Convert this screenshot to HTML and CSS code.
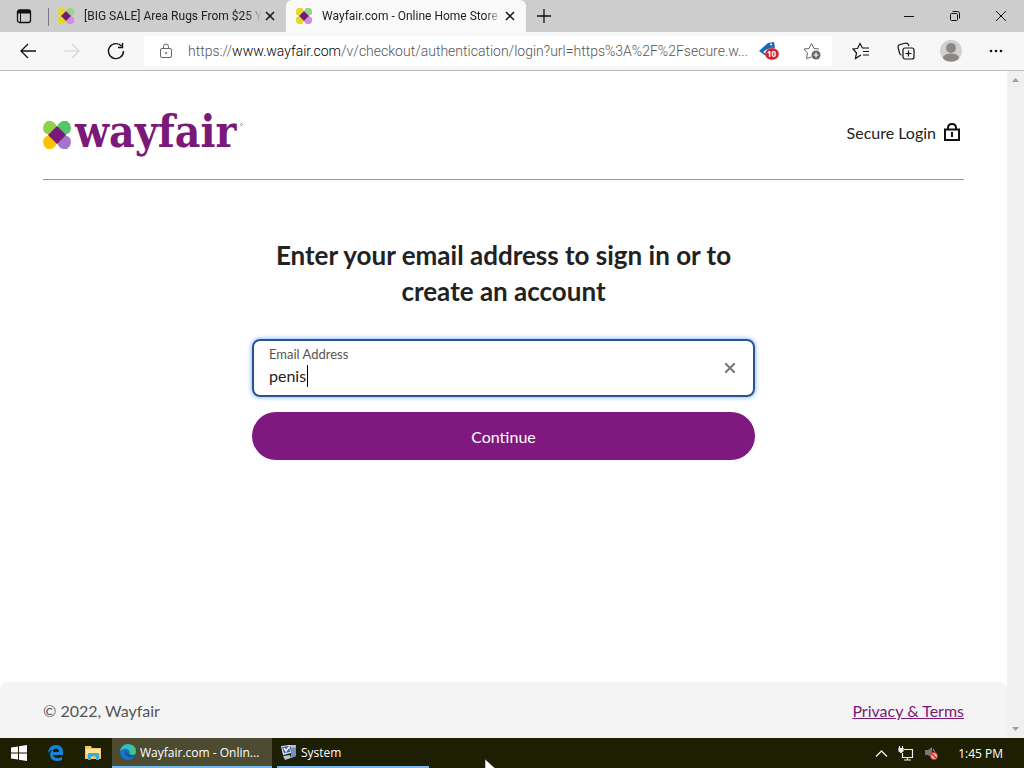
FILE: index.html
```html
<!DOCTYPE html>
<html lang="en">
<head>
    <meta charset="UTF-8">
    <title>Wayfair.com - Online Home Store</title>
    <link rel="stylesheet" href="styles.css">
</head>
<body>
    <!-- shared pinwheel, used by the tabs and the page logo -->
    <svg class="defs" aria-hidden="true">
        <symbol id="pinwheel" viewBox="0 0 28 28">
            <path fill="#8fd14a" d="M14 6 6 14 2 12Q0 10 0 7L1 3 4 0 8 0Q12 1 14 6Z"/>
            <path fill="#52c569" d="M14 6 22 14 26 12Q28 10 28 7L27 3 24 0 20 0Q16 1 14 6Z"/>
            <path fill="#fcc203" d="M14 22 6 14 2 16Q0 18 0 21L1 25 4 28 8 28Q12 27 14 22Z"/>
            <path fill="#a574cf" d="M14 22 22 14 26 16Q28 18 28 21L27 25 24 28 20 28Q16 27 14 22Z"/>
            <path fill="#7b1979" d="M14 5 23 14 14 23 5 14Z"/>
        </symbol>
        <symbol id="pinwheel-tab" viewBox="0 0 16 16">
            <path fill="#e6d72b" d="M8 3 3 8 0 6V2L2 0H6ZM3 8 8 13 6 16H2L0 14V10Z"/>
            <path fill="#9bd38a" d="M8 3 13 8 16 6V2L14 0H10Z"/>
            <path fill="#d68be6" d="M8 13 13 8 16 10V14L14 16H10Z"/>
            <path fill="#741a72" d="M8 3 13 8 8 13 3 8Z"/>
        </symbol>
    </svg>

    <div class="tab-bar">
        <button class="tab-menu" aria-label="Tab actions">
            <svg width="16" height="16" viewBox="0 0 16 16"><rect x="1.500" y="2" width="13" height="12.500" rx="2" fill="none" stroke="#111" stroke-width="1.300"/><path d="M1.500 5V4Q1.500 2 3.500 2H12.500Q14.500 2 14.500 4V5.500H1.500Z" fill="#111"/><path d="M4.500 5V14" stroke="#111" stroke-width="1"/></svg>
        </button>
        <div class="tab">
            <svg class="favicon"><use href="#pinwheel-tab"/></svg>
            <span class="tab-title">[BIG SALE] Area Rugs From $25 Y</span>
            <button class="tab-close" aria-label="Close tab"><svg width="10" height="10"><path d="M1 1 9 9M9 1 1 9" stroke="#111" stroke-width="1.500"/></svg></button>
        </div>
        <div class="tab active">
            <svg class="favicon"><use href="#pinwheel-tab"/></svg>
            <span class="tab-title">Wayfair.com - Online Home Store</span>
            <button class="tab-close" aria-label="Close tab"><svg width="10" height="10"><path d="M1 1 9 9M9 1 1 9" stroke="#111" stroke-width="1.500"/></svg></button>
        </div>
        <button class="new-tab" aria-label="New tab"><svg width="14" height="14"><path d="M7 0V14M0 7H14" stroke="#111" stroke-width="1.300"/></svg></button>
        <div class="window-buttons">
            <button aria-label="Minimize"><svg width="12" height="12"><path d="M1 6.500H11" stroke="#111"/></svg></button>
            <button aria-label="Restore"><svg width="12" height="12" fill="none" stroke="#111"><rect x="1.500" y="3.500" width="7" height="7" rx="1"/><path d="M3.500 1.500H8.500Q10.500 1.500 10.500 3.500V8.500"/></svg></button>
            <button aria-label="Close"><svg width="12" height="12"><path d="M1 1 11 11M11 1 1 11" stroke="#111"/></svg></button>
        </div>
    </div>

    <div class="toolbar">
        <button class="nav-button" aria-label="Back"><svg width="18" height="16" fill="none" stroke="#111" stroke-width="1.300"><path d="M17 8H2M9 1 2 8 9 15"/></svg></button>
        <button class="nav-button" aria-label="Forward" disabled><svg width="18" height="16" fill="none" stroke="#d4d4d4" stroke-width="1.200"><path d="M1 8H16M9 1 16 8 9 15"/></svg></button>
        <button class="nav-button" aria-label="Refresh"><svg width="18" height="18" fill="none" stroke="#111" stroke-width="1.400"><path d="M16.500 9A7.500 7.500 0 1 1 14.500 4M15.500 1V5.500H11"/></svg></button>
        <div class="address">
            <svg class="lock" width="14" height="16" fill="none" stroke="#666"><rect x="1.500" y="5.500" width="11" height="9" rx="1.500"/><path d="M4.500 5V3.500Q4.500 1 7 1T9.500 3.500V5"/><circle cx="7" cy="10" r=".6" fill="#666"/></svg>
            <span class="url">https://<b>www.wayfair.com</b>/v/checkout/authentication/login?url=https%3A%2F%2Fsecure.w...</span>
            <button aria-label="Coupons">
                <svg width="20" height="20" viewBox="0 0 20 20"><path d="M0 10 9 2 15 1 16 7 8 16Z" fill="#1769b8"/><path d="M4 11 8 8V13Z" fill="#fff"/><circle cx="12" cy="3.500" r="1" fill="#fff"/><ellipse cx="13" cy="13" rx="7" ry="6" fill="#d3232e" stroke="#f0b0b0" stroke-width=".5"/><text x="8" y="16" class="coupon-count">10</text></svg>
            </button>
            <button aria-label="Add to favorites">
                <svg width="18" height="18" fill="none" stroke="#666"><path d="M8.500 15 3.500 16.500 4.500 11 1 7 6 6.500 8.500 1.500 11 6.500 16 7"/><circle cx="13" cy="13" r="4.500" fill="#666" stroke="none"/><path d="M13 10.500V15.500M10.500 13H15.500" stroke="#fff" stroke-width="1.200"/></svg>
            </button>
        </div>
        <div class="tools">
            <button aria-label="Favorites"><svg width="18" height="18" fill="none" stroke="#111" stroke-width="1.200"><path d="M9 13 3.500 16.500 4.500 11 1 7 5.500 6.500 8 1.500 10.500 6H17M11 9.500H17M11 13H17"/></svg></button>
            <button aria-label="Collections"><svg width="18" height="18" fill="none" stroke="#111" stroke-width="1.200"><rect x="6" y="6" width="11" height="11" rx="2"/><path d="M11.500 8.500V14.500M8.500 11.500H14.500M4.500 13Q3 13 2.500 11L1 5Q1 3 3 2.500L9 1Q11 1 12 4"/></svg></button>
            <button aria-label="Profile"><svg width="22" height="22"><circle cx="11" cy="11" r="11" fill="#d2d0ce"/><circle cx="11" cy="8" r="5" fill="#8a8886"/><ellipse cx="11" cy="17.500" rx="8" ry="4" fill="#8a8886"/></svg></button>
            <button aria-label="Settings and more"><svg width="14" height="4" fill="#111"><circle cx="2" cy="2" r="1.300"/><circle cx="7" cy="2" r="1.300"/><circle cx="12" cy="2" r="1.300"/></svg></button>
        </div>
    </div>

    <div class="viewport">
        <div class="page">
            <header class="page-header">
                <a class="logo" href="#" aria-label="Wayfair">
                    <svg class="logo-mark"><use href="#pinwheel"/></svg>
                    <span>wayfair</span>
                    <svg class="trademark" width="3" height="3"><circle cx="1.500" cy="1.500" r="1" fill="none" stroke="#b58ab4"/></svg>
                </a>
                <div class="secure">
                    Secure Login
                    <svg width="16" height="18" fill="none" stroke="#111" stroke-width="2"><path d="M1 6.500H15V17H1ZM4 6V5Q4 1 8 1T12 5V6M8 9V14"/></svg>
                </div>
            </header>

            <main>
                <h1>Enter your email address to sign in or to create an account</h1>
                <form>
                    <div class="field">
                        <label for="email">Email Address</label>
                        <input id="email" type="text" value="penis">
                        <span class="caret"></span>
                        <button class="clear" type="button" aria-label="Clear"><svg width="10" height="10"><path d="M0 0 10 10M10 0 0 10" stroke="#777" stroke-width="2"/></svg></button>
                    </div>
                    <button class="continue" type="submit">Continue</button>
                </form>
            </main>

            <footer>
                <span>© 2022, Wayfair</span>
                <a href="#">Privacy &amp; Terms</a>
            </footer>
        </div>
        <div class="scrollbar">
            <svg width="7" height="4"><path d="M0 4 3.500 0 7 4Z" fill="#a0a0a0"/></svg>
            <svg width="7" height="4"><path d="M0 0 3.500 4 7 0Z" fill="#a0a0a0"/></svg>
        </div>
    </div>

    <div class="taskbar">
        <button class="launcher" aria-label="Start"><svg width="16" height="16" fill="#fff"><path d="M0 2.500 7 1.500V7.500H0ZM8 1.300 16 0V7.500H8ZM0 8.500H7V14.500L0 13.500ZM8 8.500H16V16L8 14.700Z"/></svg></button>
        <button class="launcher" aria-label="Internet Explorer"><svg width="16" height="16"><path d="M0 8Q1 0 8 0Q15 0 15 7V10H5Q6 13 9 13Q12 13 14 12V15Q12 16 9 16Q2 16 2 9Q3 5 6 4Q2 5 0 8ZM5 7H11Q11 3.500 8 3.500T5 7Z" fill="#1683d8" fill-rule="evenodd"/></svg></button>
        <button class="launcher" aria-label="File Explorer"><svg width="16" height="16"><path d="M0 1H6L7 3H16V14H0Z" fill="#f3c75e"/><path d="M1 4H15V9H1Z" fill="#fbe5a0"/><path d="M3 15V9Q3 8 4 8H13Q14 8 14 9V15H11V12Q8.500 10 6 12V15Z" fill="#3aaed0"/></svg></button>
        <button class="task current">
            <svg width="16" height="16"><circle cx="8" cy="8" r="8" fill="#1275cf"/><path d="M0 7Q2 0 8 0Q16 1 16 7Q16 11 12 11Q9 11 10 8Q8 4 4 5Q1 5 0 7Z" fill="#41c489"/><path d="M0 7Q1 2 7 1Q11 2 11 6Q9 4 5 4Q1 5 0 7Z" fill="#35b7df"/><path d="M6 6Q4 12 9 13Q12 14 15 12Q11 10 10 11Q7 10 6 6Z" fill="#15548f"/></svg>
            <span>Wayfair.com - Onlin...</span>
        </button>
        <button class="task">
            <svg width="16" height="16"><path d="M6 1H15V12L10 14V3Z" fill="#a8c3e6"/><path d="M10 4 15 3V12L10 14Z" fill="#6f91c7"/><path d="M0 2 9 1 10 9 2 11Z" fill="#dce6f5"/><path d="M1 3 8 2 9 8 3 9Z" fill="#2e5fb0"/><path d="M3 4 5 7 8 3" fill="none" stroke="#fff" stroke-width="1.500"/><path d="M2 12 9 11 10 14 4 16Z" fill="#b9c4d8"/></svg>
            <span>System</span>
        </button>
        <div class="tray">
            <svg width="13" height="7" fill="none" stroke="#eee" stroke-width="1.300"><path d="M1 6.500 6.500 1 12 6.500"/></svg>
            <svg width="16" height="15" fill="none" stroke="#eee" stroke-width="1.200"><path d="M6 3.500H14.500V11.500H4.500V7M9.500 12V14M6 14H13M1.500 0V3M4.500 0V3"/><path d="M1 2.500H5V5L3 6.500 1 5Z" fill="#eee"/></svg>
            <svg width="14" height="14"><path d="M1 4 4 4 8 1V12L4 9H1Z" fill="#777"/><path d="M9 3Q12 5 9 9" fill="none" stroke="#aaa"/><circle cx="10" cy="10" r="3.500" fill="#e8b0b0" stroke="#d02c2c"/><path d="M8 8 12 12" stroke="#d02c2c" stroke-width="1.500"/></svg>
            <span class="clock">1:45 PM</span>
        </div>
        <svg class="pointer" width="12" height="18"><path d="M0 0V16L4 12 7 18 9 17 7 11H12Z" fill="#fff" stroke="#111" stroke-width=".5"/></svg>
    </div>
</body>
</html>
```
FILE: styles.css
```css
* {
    box-sizing: border-box;
}
body {
    margin: 0;
    height: 100vh;
    overflow: hidden;
    display: flex;
    flex-direction: column;
    font-family: "Open Sans", "Noto Sans", sans-serif;
    background: #fff;
}
button {
    display: flex;
    align-items: center;
    justify-content: center;
    flex: none;
    padding: 0;
    border: none;
    background: none;
    font: inherit;
    color: inherit;
}
svg {
    display: block;
    flex: none;
}
.defs {
    position: absolute;
    width: 0;
    height: 0;
}

/* tabs */
.tab-bar {
    display: flex;
    flex: none;
    height: 32px;
    background: #cdcdcd;
}
.tab-menu {
    width: 48px;
}
.tab {
    display: flex;
    align-items: center;
    flex: none;
    width: 238px;
    padding: 0 8px 0 10px;
    font-family: Roboto, "Open Sans", sans-serif;
    font-size: 12px;
    color: #222;
    background: linear-gradient(#777, #777) 0 8px / 1px 18px no-repeat;
}
.tab.active {
    width: 240px;
    background: #f9f9f9;
    border-radius: 6px 6px 0 0;
}
.favicon {
    width: 16px;
    height: 16px;
    margin-right: 10px;
}
.tab-title {
    flex: 1;
    overflow: hidden;
    white-space: nowrap;
    -webkit-mask-image: linear-gradient(to left, transparent, #000 16px);
    mask-image: linear-gradient(to left, transparent, #000 16px);
}
.tab-close {
    width: 16px;
    height: 16px;
}
.new-tab {
    width: 36px;
}
.window-buttons {
    display: flex;
    margin-left: auto;
}
.window-buttons button {
    width: 46px;
}

/* address bar */
.toolbar {
    display: flex;
    align-items: center;
    flex: none;
    height: 39px;
    padding-left: 6px;
    background: #f7f7f7;
    border-bottom: 1px solid #bdbdbd;
}
.nav-button {
    width: 44px;
    height: 32px;
}
.address {
    display: flex;
    align-items: center;
    flex: 1;
    min-width: 0;
    height: 30px;
    margin-left: 6px;
    padding: 0 11px 0 15px;
    background: #fff;
}
.lock {
    margin-right: 15px;
}
.url {
    flex: 1;
    overflow: hidden;
    white-space: nowrap;
    text-overflow: ellipsis;
    margin-right: 4px;
    font-family: Roboto, "Open Sans", sans-serif;
    font-size: 14px;
    font-weight: 300;
    color: #555;
}
.url b {
    font-weight: 300;
    color: #000;
}
.address button + button {
    margin-left: 24px;
}
.coupon-count {
    font: bold 8px "Open Sans", sans-serif;
    fill: #fff;
}
.tools {
    display: flex;
    padding: 0 6px;
}
.tools button {
    width: 45px;
    height: 32px;
}

/* page */
.viewport {
    display: flex;
    flex: 1;
    min-height: 0;
}
.page {
    display: flex;
    flex-direction: column;
    flex: 1;
    font-family: Lato, sans-serif;
    font-size: 16px;
    color: #222;
}
.page-header {
    display: flex;
    align-items: center;
    justify-content: space-between;
    height: 109px;
    margin: 0 43px;
    padding-top: 14px;
    border-bottom: 1px solid #999;
}
.logo {
    display: flex;
    align-items: center;
    gap: 4px;
    font: bold 44px/56px "DejaVu Serif Condensed", "DejaVu Serif", serif;
    color: #7b1979;
    text-decoration: none;
}
.logo-mark {
    width: 28px;
    height: 28px;
    margin-top: 6px;
}
.trademark {
    margin-bottom: 16px;
}
.secure {
    display: flex;
    align-items: center;
    gap: 8px;
    padding-right: 4px;
}
main {
    flex: 1;
    width: 503px;
    max-width: 100%;
    margin: 0 auto;
    padding-top: 57px;
}
h1 {
    margin: 0 0 30px;
    font-size: 26px;
    line-height: 36px;
    text-align: center;
}
.field {
    position: relative;
    height: 58px;
    padding: 6px 15px;
    border: 2px solid #2f4f94;
    border-radius: 8px;
    box-shadow: 0 0 4px 1px #8fc4ff;
}
.field label {
    display: block;
    font-size: 13px;
    line-height: 15px;
    color: #555;
}
.field input {
    display: block;
    width: 90%;
    height: 26px;
    padding: 0;
    border: none;
    outline: none;
    background: none;
    font: inherit;
    color: #222;
}
.caret {
    position: absolute;
    left: 53px;
    top: 24px;
    width: 1px;
    height: 22px;
    background: #000;
}
.clear {
    position: absolute;
    right: 11px;
    top: 15px;
    width: 24px;
    height: 24px;
}
.continue {
    width: 100%;
    height: 48px;
    margin-top: 15px;
    border-radius: 24px;
    background: #7f187f;
    color: #fff;
}
footer {
    display: flex;
    align-items: center;
    justify-content: space-between;
    height: 56px;
    padding: 0 43px;
    background: #f4f4f5;
    border-radius: 8px 8px 0 0;
    color: #555;
}
footer a {
    color: #7b1979;
}
.scrollbar {
    display: flex;
    flex-direction: column;
    align-items: center;
    justify-content: space-between;
    width: 17px;
    padding: 7px 0;
    background: #f0f0f0;
}

/* taskbar */
.taskbar {
    position: relative;
    display: flex;
    flex: none;
    height: 30px;
    overflow: hidden;
    background: #1e1e02;
    color: #fff;
    font-size: 12px;
}
.launcher {
    width: 37px;
}
.task {
    justify-content: flex-start;
    gap: 4px;
    width: 152px;
    margin-left: 5px;
    padding: 0 4px;
    border-bottom: 2px solid #76b9ed;
}
.task.current {
    width: 160px;
    margin-left: 1px;
    padding: 0 8px;
    background: #4d4c33;
}
.task span {
    overflow: hidden;
    white-space: nowrap;
    text-overflow: ellipsis;
}
.tray {
    display: flex;
    align-items: center;
    gap: 10px;
    margin-left: auto;
    padding-right: 21px;
}
.clock {
    margin-left: 10px;
}
.pointer {
    position: absolute;
    left: 485px;
    top: 21px;
}
```
